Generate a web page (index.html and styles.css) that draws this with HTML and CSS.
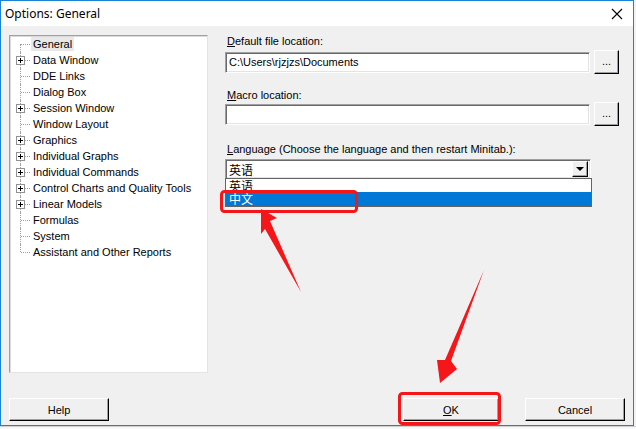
FILE: index.html
```html
<!DOCTYPE html>
<html>
  <head>
    <title>Options: General</title>
    <link rel="stylesheet" href="styles.css">
  </head>
  <body>
    <div class="screen">
      <div class="window">
        <div class="titlebar">
          <span class="title">Options: General</span>
          <svg class="close" width="12" height="12" viewBox="0 0 12 12">
            <path d="M1 1 L11 11 M11 1 L1 11" stroke="#000" stroke-width="1.1" fill="none"/>
          </svg>
        </div>

        <div class="body">
          <div class="main">
            <div class="tree">
              <ul>
                <li class="node first"><span class="twig"></span><span class="label selected">General</span></li>
                <li class="node"><span class="twig"><i class="plus"></i></span><span class="label">Data Window</span></li>
                <li class="node"><span class="twig"></span><span class="label">DDE Links</span></li>
                <li class="node"><span class="twig"></span><span class="label">Dialog Box</span></li>
                <li class="node"><span class="twig"><i class="plus"></i></span><span class="label">Session Window</span></li>
                <li class="node"><span class="twig"></span><span class="label">Window Layout</span></li>
                <li class="node"><span class="twig"><i class="plus"></i></span><span class="label">Graphics</span></li>
                <li class="node"><span class="twig"><i class="plus"></i></span><span class="label">Individual Graphs</span></li>
                <li class="node"><span class="twig"><i class="plus"></i></span><span class="label">Individual Commands</span></li>
                <li class="node"><span class="twig"><i class="plus"></i></span><span class="label">Control Charts and Quality Tools</span></li>
                <li class="node"><span class="twig"><i class="plus"></i></span><span class="label">Linear Models</span></li>
                <li class="node"><span class="twig"></span><span class="label">Formulas</span></li>
                <li class="node"><span class="twig"></span><span class="label">System</span></li>
                <li class="node last"><span class="twig"></span><span class="label">Assistant and Other Reports</span></li>
              </ul>
            </div>

            <div class="form">
              <div class="field-label"><u>D</u>efault file location:</div>
              <div class="path-row">
                <div class="textbox">C:\Users\rjzjzs\Documents</div>
                <button class="btn browse">...</button>
              </div>

              <div class="field-label macro"><u>M</u>acro location:</div>
              <div class="path-row">
                <div class="textbox"></div>
                <button class="btn browse">...</button>
              </div>

              <div class="field-label lang"><u>L</u>anguage (Choose the language and then restart Minitab.):</div>
              <div class="combo">
                <span class="combo-text">英语</span>
                <span class="combo-arrow"><i></i></span>
                <ul class="dropdown">
                  <li>英语</li>
                  <li class="picked">中文</li>
                </ul>
              </div>
            </div>
          </div>

          <div class="footer">
            <button class="btn">Help</button>
            <div class="spacer"></div>
            <button class="btn ok"><u>O</u>K</button>
            <button class="btn">Cancel</button>
          </div>
        </div>
      </div>

      <div class="sheet"></div>

      <!-- red annotations drawn over the dialog -->
      <svg class="marks" width="636" height="429" viewBox="0 0 636 429">
        <rect x="221.5" y="191.5" width="135" height="20" rx="3" fill="none" stroke="#f5161a" stroke-width="3"/>
        <rect x="399.5" y="393.5" width="100" height="30" rx="3" fill="none" stroke="#f5161a" stroke-width="3"/>
        <polygon points="261,209 277,218 270,221 301,292 265,229 261,234" fill="#f5161a"/>
        <polygon points="484,270 451,361 457,369 440,383 437,360 445,360" fill="#f5161a"/>
      </svg>
    </div>
  </body>
</html>
```

FILE: styles.css
```css
* {
  box-sizing: border-box;
}

body, html {
  margin: 0;
  padding: 0;
}

body {
  background-color: #f3f3f3;
  font-family: 'Liberation Sans', Arial, sans-serif;
  font-size: 11px;
  color: #000;
}

.screen {
  position: relative;
  width: 636px;
  height: 429px;
  overflow: hidden;
}

.window {
  width: 634px;
  height: 426px;
  border: 1px solid #1883d7;
  background-color: #f0f0f0;
  display: flex;
  flex-direction: column;
}

.titlebar {
  height: 25px;
  background-color: #fff;
  display: flex;
  align-items: center;
  justify-content: space-between;
  padding: 0 10px 0 4px;
}

.title {
  font-family: 'Noto Sans', sans-serif;
  font-size: 12px;
}

.body {
  flex: 1;
  padding: 9px 8px 4px 8px;
  display: flex;
  flex-direction: column;
}

.main {
  display: grid;
  grid-template-columns: 199px 1fr;
  column-gap: 17px;
}

/* tree */

.tree {
  height: 338px;
  background-color: #fff;
  border: 1px solid;
  border-color: #a0a0a0 #e3e3e3 #e3e3e3 #a0a0a0;
  box-shadow: inset 1px 1px 0 #dadada;
}

.tree ul {
  list-style: none;
  margin: 0;
  padding: 0;
}

.node {
  display: flex;
  align-items: center;
  height: 16px;
}

.twig {
  position: relative;
  width: 21px;
  height: 16px;
  flex-shrink: 0;
}

.twig::before {
  content: "";
  position: absolute;
  left: 10px;
  top: 0;
  bottom: 0;
  border-left: 1px dotted #a0a0a0;
}

.first .twig::before {
  top: 8px;
}

.last .twig::before {
  bottom: 8px;
}

.twig::after {
  content: "";
  position: absolute;
  left: 11px;
  top: 8px;
  width: 9px;
  border-top: 1px dotted #a0a0a0;
}

.plus {
  position: absolute;
  left: 6px;
  top: 4px;
  width: 9px;
  height: 9px;
  border: 1px solid #919191;
  background: linear-gradient(#000, #000) center / 5px 1px no-repeat,
              linear-gradient(#000, #000) center / 1px 5px no-repeat,
              #fff;
  z-index: 1;
}

.label {
  padding: 1px 2px;
  white-space: nowrap;
  line-height: 12px;
}

.label.selected {
  background-color: #e8e8e8;
  padding: 1px 2px;
}

/* form */

.form {
  position: relative;
}

.field-label {
  height: 13px;
  line-height: 13px;
  padding-left: 2px;
  margin-bottom: 2px;
}

.field-label.macro {
  margin-top: 15px;
  margin-bottom: 0;
}

.field-label.lang {
  margin-top: 17px;
  margin-bottom: 3px;
}

.path-row {
  display: flex;
  align-items: center;
  gap: 4px;
  height: 24px;
}

.textbox {
  width: 365px;
  height: 21px;
  background-color: #fff;
  border: 1px solid;
  border-color: #a0a0a0 #fff #fff #a0a0a0;
  box-shadow: inset 1px 1px 0 #696969, inset -1px -1px 0 #e3e3e3;
  padding: 3px 3px;
  line-height: 13px;
}

.btn {
  font-family: 'Liberation Sans', Arial, sans-serif;
  font-size: 11px;
  color: #000;
  background-color: #f0f0f0;
  border: 1px solid;
  border-color: #fff #000 #000 #fff;
  box-shadow: inset -1px -1px 0 #a0a0a0;
  padding: 0;
  height: 23px;
  width: 100px;
}

.browse {
  width: 25px;
  height: 24px;
  padding-bottom: 2px;
}

.combo {
  position: relative;
  width: 366px;
  height: 20px;
  background-color: #fff;
  border: 1px solid;
  border-color: #a0a0a0 #fff #fff #a0a0a0;
  box-shadow: inset 1px 1px 0 #696969, inset -1px -1px 0 #e3e3e3;
  display: flex;
  align-items: center;
  justify-content: space-between;
  padding: 0 2px 0 3px;
  font-family: 'Noto Sans CJK SC', sans-serif;
  font-size: 12px;
}

.combo-arrow {
  width: 16px;
  height: 16px;
  background-color: #f0f0f0;
  border: 1px solid;
  border-color: #fff #000 #000 #fff;
  box-shadow: inset -1px -1px 0 #a0a0a0;
  display: flex;
  align-items: center;
  justify-content: center;
}

.combo-arrow i {
  width: 0;
  height: 0;
  border-left: 4px solid transparent;
  border-right: 4px solid transparent;
  border-top: 4px solid #000;
}

.dropdown {
  position: absolute;
  left: -1px;
  top: 18px;
  width: 367px;
  margin: 0;
  padding: 0;
  list-style: none;
  background-color: #fff;
  border: 1px solid #646464;
  font-family: 'Noto Sans CJK SC', sans-serif;
  font-size: 12px;
}

.dropdown li {
  height: 13px;
  line-height: 13px;
  padding-left: 3px;
  overflow: hidden;
}

.dropdown li.picked {
  height: 14px;
  line-height: 14px;
  background-color: #0078d7;
  color: #fff;
}

/* footer */

.footer {
  margin-top: 25px;
  display: flex;
  align-items: center;
}

.spacer {
  flex: 1;
}

.btn.ok {
  width: 96px;
  margin-right: 26px;
}

.sheet {
  height: 3px;
  background-color: #f7f7f7;
  border-top: 1px solid #d0d0d0;
}

.marks {
  position: absolute;
  top: 0;
  left: 0;
  pointer-events: none;
}
```
